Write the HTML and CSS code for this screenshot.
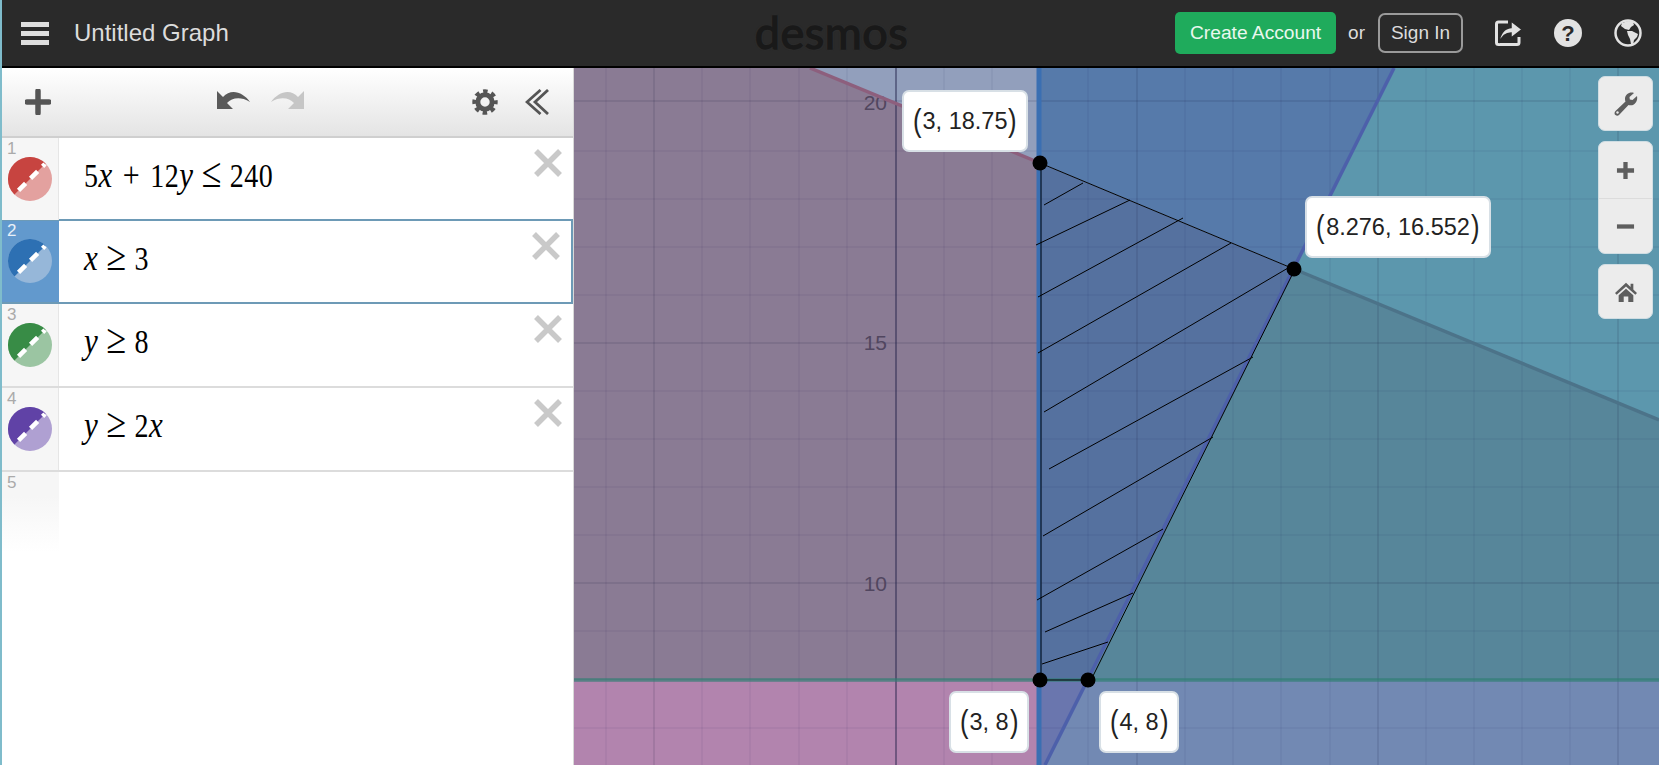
FILE: index.html
```html
<!DOCTYPE html>
<html lang="en">
<head>
<meta charset="utf-8">
<title>Untitled Graph - Desmos</title>
<link rel="stylesheet" href="styles.css">
</head>
<body>
<div class="app">
  <header class="topbar">
    <div class="top-left">
      <div class="menu"><span></span><span></span><span></span></div>
      <div class="title">Untitled Graph</div>
    </div>
    <div class="logo">desmos</div>
    <div class="top-right">
      <a class="btn-create">Create Account</a>
      <span class="or">or</span>
      <a class="btn-signin">Sign In</a>
      <svg class="top-icon" viewBox="0 0 28 28"><path d="M14 3H4.500Q2.500 3 2.500 5V23.500Q2.500 25.500 4.500 25.500H23Q25 25.500 25 23.500V18" fill="none" stroke="#e2e2e2" stroke-width="3"/><path d="M5 24C5.500 14 11 9 17 8.500V2L28 10.500L17 19V14C12 14 8 17 5 24Z" fill="#e2e2e2" stroke="#2a2a2a" stroke-width="1.500"/></svg>
      <svg class="top-icon" viewBox="0 0 28 28"><circle cx="14" cy="14" r="14" fill="#e2e2e2"/><text class="help-q" x="14" y="22" text-anchor="middle">?</text></svg>
      <svg class="top-icon" viewBox="0 0 28 28"><circle cx="14" cy="14" r="12.500" fill="none" stroke="#e2e2e2" stroke-width="2.500"/><path d="M8 4L14 2L19 3L20 6L17 8L15 11L11 10L7 7ZM13 12L18 12L24 15L23 18L20 21L19 26L17 25L16 20L14 16Z" fill="#e2e2e2"/></svg>
    </div>
  </header>
  <main class="main">
    <aside class="sidebar">
      <div class="toolbar">
        <svg class="tool-plus" viewBox="0 0 26 26"><path d="M13 2V24M2 13H24" stroke="#555" stroke-width="5.500" stroke-linecap="round" fill="none"/></svg>
        <div class="undo-redo">
          <svg class="tool-undo" viewBox="0 0 33 20"><path d="M0 1V19H16L10 13C15 8 23 6 33 12C26 2 14 -2 6 7Z" fill="#5a5a5a"/></svg>
          <svg class="tool-undo redo" viewBox="0 0 33 20"><path d="M0 1V19H16L10 13C15 8 23 6 33 12C26 2 14 -2 6 7Z" fill="#c6c6c6"/></svg>
        </div>
        <div class="tool-right">
          <svg class="tool-gear" viewBox="0 0 26 26"><circle cx="13" cy="13" r="10.500" fill="none" stroke="#555" stroke-width="4.400" stroke-dasharray="4.400 3.850" stroke-dashoffset="2.200"/><circle cx="13" cy="13" r="7.200" fill="none" stroke="#555" stroke-width="5"/></svg>
          <svg class="tool-hide" viewBox="0 0 24 26"><path d="M15.500 1L2 13L15.500 25M23 1L10 13L23 25" fill="none" stroke="#555" stroke-width="2.800"/></svg>
        </div>
      </div>

      <div class="row first">
        <div class="gutter">
          <div class="num">1</div>
          <svg class="swatch" viewBox="0 0 44 44"><circle cx="22" cy="22" r="22" fill="#e3a19f"/><path d="M6.440 37.560A22 22 0 0 1 37.560 6.440Z" fill="#c74440"/><path d="M7 37L37 7" class="dash"/></svg>
        </div>
        <div class="expr"><span class="math">5<i>x</i><span class="bin">+</span>12<i>y</i><span class="rel">≤</span>240</span></div>
        <svg class="close" viewBox="0 0 28 28"><path d="M2 2L26 26M26 2L2 26" stroke="#c9c9c9" stroke-width="5.500" fill="none"/></svg>
      </div>

      <div class="row focus">
        <div class="gutter">
          <div class="num">2</div>
          <svg class="swatch" viewBox="0 0 44 44"><circle cx="22" cy="22" r="22" fill="#96b7d9"/><path d="M6.440 37.560A22 22 0 0 1 37.560 6.440Z" fill="#2d70b3"/><path d="M7 37L37 7" class="dash"/></svg>
        </div>
        <div class="expr"><span class="math"><i>x</i><span class="rel">≥</span>3</span></div>
        <svg class="close" viewBox="0 0 28 28"><path d="M2 2L26 26M26 2L2 26" stroke="#c9c9c9" stroke-width="5.500" fill="none"/></svg>
      </div>

      <div class="row">
        <div class="gutter">
          <div class="num">3</div>
          <svg class="swatch" viewBox="0 0 44 44"><circle cx="22" cy="22" r="22" fill="#9bc5a2"/><path d="M6.440 37.560A22 22 0 0 1 37.560 6.440Z" fill="#388c46"/><path d="M7 37L37 7" class="dash"/></svg>
        </div>
        <div class="expr"><span class="math"><i>y</i><span class="rel">≥</span>8</span></div>
        <svg class="close" viewBox="0 0 28 28"><path d="M2 2L26 26M26 2L2 26" stroke="#c9c9c9" stroke-width="5.500" fill="none"/></svg>
      </div>

      <div class="row">
        <div class="gutter">
          <div class="num">4</div>
          <svg class="swatch" viewBox="0 0 44 44"><circle cx="22" cy="22" r="22" fill="#afa0d2"/><path d="M6.440 37.560A22 22 0 0 1 37.560 6.440Z" fill="#6042a6"/><path d="M7 37L37 7" class="dash"/></svg>
        </div>
        <div class="expr"><span class="math"><i>y</i><span class="rel">≥</span>2<i>x</i></span></div>
        <svg class="close" viewBox="0 0 28 28"><path d="M2 2L26 26M26 2L2 26" stroke="#c9c9c9" stroke-width="5.500" fill="none"/></svg>
      </div>

      <div class="row empty">
        <div class="gutter"><div class="num">5</div></div>
      </div>
    </aside>

    <section class="graph">
      <svg class="plot" viewBox="574 68 1085 697" preserveAspectRatio="none">
        <polygon fill="#929fbc" points="574,68 1040,68 1040,163 810,68"/>
        <polygon fill="#8a7b94" points="574,68 810,68 1040,163 1040,680 574,680"/>
        <polygon fill="#b284ae" points="574,680 1040,680 1040,765 574,765"/>
        <polygon fill="#567aaa" points="1040,68 1394,68 1294,269 1040,163"/>
        <polygon fill="#5c97ad" points="1394,68 1659,68 1659,420 1294,269"/>
        <polygon fill="#57869a" points="1294,269 1659,420 1659,680 1088,680"/>
        <polygon fill="#55719f" points="1040,163 1294,269 1088,680 1040,680"/>
        <polygon fill="#7289b3" points="1088,680 1659,680 1659,765 1045,765"/>
        <polygon fill="#6a76ae" points="1040,680 1088,680 1045,765 1040,765"/>

        <g class="minor">
          <path d="M606 68V765M702 68V765M750 68V765M799 68V765M847 68V765M944 68V765M992 68V765M1040 68V765M1088 68V765M1185 68V765M1233 68V765M1281 68V765M1330 68V765M1426 68V765M1474 68V765M1522 68V765M1570 68V765"/>
          <path d="M574 151H1659M574 199H1659M574 247H1659M574 295H1659M574 391H1659M574 439H1659M574 487H1659M574 535H1659M574 631H1659M574 728H1659"/>
        </g>
        <g class="major">
          <path d="M654 68V765M1137 68V765M1378 68V765M1618 68V765"/>
          <path d="M574 101H1659M574 343H1659M574 583H1659"/>
        </g>
        <path class="axis" d="M896 68V765"/>

        <text class="tick" x="887" y="110" text-anchor="end">20</text>
        <text class="tick" x="887" y="350" text-anchor="end">15</text>
        <text class="tick" x="887" y="591" text-anchor="end">10</text>

        <path class="curve-red" d="M810 68L1040 163"/>
        <path class="curve-red-far" d="M1294 269L1659 420"/>
        <path class="curve-green" d="M574 680H1659"/>
        <path class="curve-purple" d="M1394 68L1045 765"/>
        <path class="curve-blue" d="M1039 68V765"/>

        <g class="hatch">
          <path d="M1040 163L1294 269M1041 163V680M1293 273L1091 680M1040 680H1088"/>
          <path d="M1044 205L1083 183M1036 245L1130 200M1038 297L1183 218M1038 353L1231 243M1044 412L1288 268M1049 469L1253 357M1043 536L1213 437M1037 600L1163 529M1045 632L1133 593M1042 664L1108 642"/>
        </g>

        <circle cx="1040" cy="163" r="7.500"/>
        <circle cx="1294" cy="269" r="7.500"/>
        <circle cx="1040" cy="680" r="7.500"/>
        <circle cx="1088" cy="680" r="7.500"/>
      </svg>

      <div class="coord c1"><span class="paren">(</span>3, 18.75<span class="paren">)</span></div>
      <div class="coord c2"><span class="paren">(</span>8.276, 16.552<span class="paren">)</span></div>
      <div class="coord c3"><span class="paren">(</span>3, 8<span class="paren">)</span></div>
      <div class="coord c4"><span class="paren">(</span>4, 8<span class="paren">)</span></div>

      <div class="controls">
        <div class="ctl">
          <svg class="ctl-wrench" viewBox="0 0 24 24"><path d="M23 4L18.500 8L15.800 7.600L15.500 5L20 1C16 -.5 11 2 11 7C11 8 11.200 9 11.500 9.500L1.500 19C0 20.500 .5 22.500 1.500 23C2.500 24 4 24 5 23L14.500 13C15.500 13.300 16 13.400 17 13.300C21 13 24 9 23 4Z" fill="#5e5e5e"/><circle cx="3.500" cy="20.500" r="1.200" fill="#ececec"/></svg>
        </div>
        <div class="ctl-group">
          <div class="ctl-half"><svg class="ctl-sign" viewBox="0 0 20 20"><path d="M10 1V19M1 10H19" stroke="#5e5e5e" stroke-width="4.500" fill="none"/></svg></div>
          <div class="ctl-half minus"><svg class="ctl-sign" viewBox="0 0 20 20"><path d="M1 10H19" stroke="#5e5e5e" stroke-width="4.500" fill="none"/></svg></div>
        </div>
        <div class="ctl">
          <svg class="ctl-home" viewBox="0 0 24 24"><path d="M12 2L0 13L1.800 15L12 6L22.200 15L24 13L20 9.400V3H17V6.600Z" fill="#5e5e5e"/><path d="M4 15.500L12 8.500L20 15.500V23H14.500V17H9.500V23H4Z" fill="#5e5e5e"/></svg>
        </div>
      </div>
    </section>
  </main>
</div>
</body>
</html>
```

FILE: styles.css
```css
* { box-sizing: border-box; }

html, body {
  margin: 0;
  height: 100%;
  overflow: hidden;
  font-family: "Liberation Sans", Arial, sans-serif;
}

.app {
  display: flex;
  flex-direction: column;
  height: 765px;
  border-left: 2px solid #7fbccb;
  background: #fff;
}

/* top bar */
.topbar {
  display: flex;
  align-items: center;
  height: 68px;
  flex: none;
  background: #2a2a2a;
  border-bottom: 2px solid #000;
  color: #e2e2e2;
}

.top-left {
  flex: 1;
  display: flex;
  align-items: center;
  padding-left: 19px;
}

.menu {
  display: flex;
  flex-direction: column;
  gap: 4px;
  width: 28px;
}

.menu span {
  display: block;
  height: 5px;
  background: #dedede;
}

.title {
  margin-left: 25px;
  font-size: 24px;
  color: #dcdcdc;
}

.logo {
  font-family: "Lato", "Liberation Sans", sans-serif;
  font-size: 45px;
  line-height: 1;
  letter-spacing: 0.5px;
  color: #191919;
  -webkit-text-stroke: 1.4px #191919;
  text-shadow: 0 0 2px #3d3d3d;
  margin-top: -1px;
}

.top-right {
  flex: 1;
  display: flex;
  align-items: center;
  justify-content: flex-end;
  padding-right: 17px;
}

.btn-create {
  display: flex;
  align-items: center;
  justify-content: center;
  width: 161px;
  height: 42px;
  background: #1fab5c;
  border-radius: 5px;
  color: #e9f7ee;
  font-size: 19.200px;
}

.or {
  margin: 0 13px 0 12px;
  font-size: 19px;
  color: #dcdcdc;
}

.btn-signin {
  display: flex;
  align-items: center;
  justify-content: center;
  width: 85px;
  height: 40px;
  margin-right: 31px;
  border: 2px solid #9a9a9a;
  border-radius: 7px;
  font-size: 19px;
  color: #dcdcdc;
}

.top-icon {
  width: 28px;
  height: 28px;
  margin-left: 32px;
}

.btn-signin + .top-icon {
  margin-left: 0;
}

.help-q {
  font-family: "Liberation Sans", sans-serif;
  font-weight: 700;
  font-size: 22px;
  fill: #2a2a2a;
}

/* main */
.main {
  flex: 1;
  display: flex;
  min-height: 0;
}

.sidebar {
  width: 572px;
  flex: none;
  background: #fff;
  border-right: 1px solid #d8d8d8;
}

.toolbar {
  display: flex;
  align-items: center;
  height: 70px;
  padding: 0 24px 0 23px;
  background: linear-gradient(#ffffff, #e4e4e4);
  border-bottom: 2px solid #cfcfcf;
}

.tool-plus {
  width: 26px;
  height: 26px;
  flex: none;
}

.undo-redo {
  display: flex;
  gap: 21px;
  margin-left: 166px;
  margin-top: -5px;
}

.tool-undo {
  width: 33px;
  height: 20px;
}

.redo {
  transform: scaleX(-1);
}

.tool-right {
  display: flex;
  align-items: center;
  gap: 27px;
  margin-left: auto;
}

.tool-gear {
  width: 26px;
  height: 26px;
}

.tool-hide {
  width: 24px;
  height: 26px;
}

.row {
  display: flex;
  height: 84px;
  background: #fff;
  border-bottom: 2px solid #dcdcdc;
}

.row.first {
  height: 82px;
  border-bottom: 0;
}

.row.focus {
  height: 85px;
  margin-top: -1px;
  border: 2px solid #6d9ab6;
  border-left: 0;
}

.gutter {
  width: 57px;
  flex: none;
  padding-top: 3px;
  background: #f6f6f6;
  border-right: 1px solid #e6e6e6;
}

.focus .gutter {
  background: #6299cd;
  border-right: 0;
  padding-top: 2px;
}

.num {
  height: 16px;
  padding-left: 5px;
  font-size: 17px;
  line-height: 16px;
  color: #aaa;
}

.focus .num {
  color: #e8f0f8;
}

.swatch {
  display: block;
  width: 44px;
  height: 44px;
  margin-left: 6px;
}

.dash {
  fill: none;
  stroke: #fff;
  stroke-width: 4.500;
  stroke-dasharray: 10 7;
  stroke-dashoffset: -5;
}

.expr {
  flex: 1;
  display: flex;
  align-items: center;
  padding-left: 25px;
  padding-bottom: 10px;
}

.math {
  display: inline-block;
  font-family: "Liberation Serif", "Times New Roman", serif;
  font-size: 28px;
  letter-spacing: 0.5px;
  color: #000;
  transform: scaleY(1.18);
  white-space: pre;
}

.math i {
  font-size: 31px;
}

.rel {
  font-size: 36px;
  line-height: 1;
  margin: 0 8px;
}

.bin {
  font-size: 30px;
  margin: 0 10px;
}

.close {
  width: 28px;
  height: 28px;
  flex: none;
  margin: 11px 11px 0 0;
}

.row.empty {
  height: 80px;
  border-bottom: 0;
}

.row.empty .gutter {
  background: linear-gradient(#f6f6f6 30%, #ffffff);
  border-right: 0;
}

/* graph */
.graph {
  position: relative;
  flex: 1;
  min-width: 0;
  overflow: hidden;
}

.plot {
  display: block;
  width: 100%;
  height: 100%;
}

.minor {
  fill: none;
  stroke: rgba(20, 20, 60, 0.06);
  stroke-width: 1.500;
}

.major {
  fill: none;
  stroke: rgba(20, 20, 60, 0.14);
  stroke-width: 1.500;
}

.axis {
  fill: none;
  stroke: rgba(30, 30, 70, 0.45);
  stroke-width: 2;
}

.tick {
  font-family: "Liberation Sans", sans-serif;
  font-size: 21px;
  fill: #51465f;
  stroke: none;
}

.curve-red { stroke: #8d5f7d; stroke-width: 3.500; fill: none; }
.curve-red-far { stroke: #4c7389; stroke-width: 3.500; fill: none; }
.curve-green { stroke: #2f7f72; stroke-opacity: 0.7; stroke-width: 3.500; fill: none; }
.curve-purple { stroke: #4d60aa; stroke-width: 3.500; fill: none; }
.curve-blue { stroke: #3a6fb2; stroke-width: 5; fill: none; }

.hatch {
  fill: none;
  stroke: #000;
  stroke-width: 1;
}

.plot circle { fill: #000; }

.coord {
  position: absolute;
  display: flex;
  align-items: center;
  justify-content: center;
  height: 62px;
  background: #fff;
  border: 2px solid #d8e0e6;
  border-radius: 7px;
  font-size: 23.500px;
  color: #222;
  white-space: pre;
}

.paren {
  font-size: 32px;
  font-weight: 400;
  line-height: 1;
  margin-top: -2px;
  transform: scaleX(0.8);
}

.c1 { left: 328px; top: 22px; width: 126px; }
.c2 { left: 731px; top: 128px; width: 186px; }
.c3 { left: 375px; top: 623px; width: 80px; }
.c4 { left: 525px; top: 623px; width: 80px; }

.controls {
  position: absolute;
  top: 8px;
  right: 6px;
  display: flex;
  flex-direction: column;
  gap: 10px;
  width: 55px;
}

.ctl,
.ctl-half {
  display: flex;
  align-items: center;
  justify-content: center;
  height: 55px;
}

.ctl,
.ctl-group {
  background: #ececec;
  border: 1px solid #cfdde3;
  border-radius: 7px;
}

.ctl-group {
  display: flex;
  flex-direction: column;
}

.ctl-half {
  height: 56px;
}

.minus {
  height: 55px;
  border-top: 1px solid #dcdcdc;
}

.ctl-wrench {
  width: 24px;
  height: 24px;
}

.ctl-sign {
  width: 19px;
  height: 19px;
}

.ctl-home {
  width: 24px;
  height: 22px;
}
```
